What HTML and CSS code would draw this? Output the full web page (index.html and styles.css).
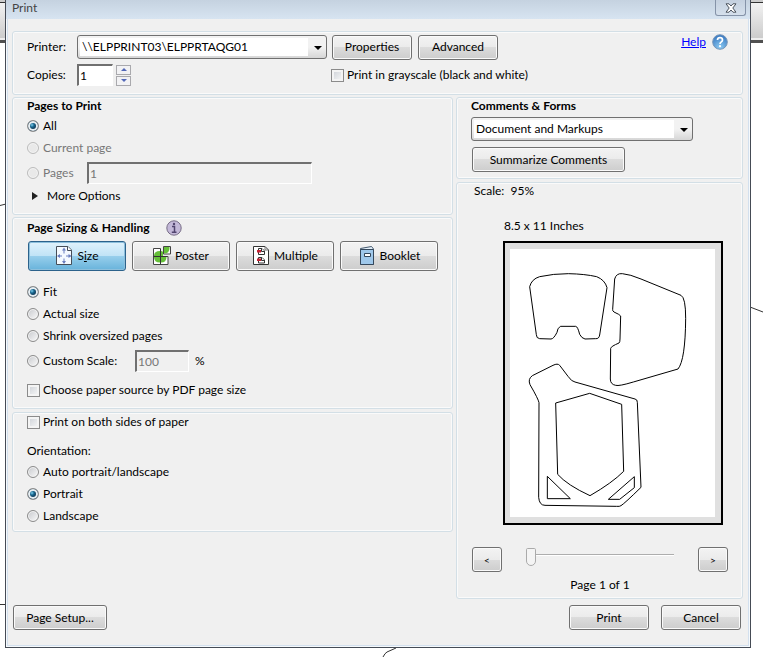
FILE: index.html
```html
<!DOCTYPE html>
<html lang="en">
<head>
<meta charset="utf-8">
<title>Print</title>
<link rel="stylesheet" href="styles.css">
</head>
<body>
<div class="backdrop" aria-hidden="true">
  <div class="toolbar"></div>
  <svg class="line line-a" width="6" height="4"><path d="M0 2.500L6 1"/></svg>
  <svg class="line line-b" width="6" height="4"><path d="M0 1.500H6"/></svg>
  <svg class="line line-c" width="13" height="8"><path d="M0 1L13 6"/></svg>
  <svg class="line line-d" width="16" height="12"><path d="M1 11Q3 7 5 6L14 2"/></svg>
</div>
<main class="dialog">
  <header class="titlebar">
    <h1>Print</h1>
    <button class="close" aria-label="Close"><svg width="12" height="10" viewBox="0 0 12 10"><path d="M1 .8h3L6 3 8 .8h3L7.800 5 11 9.200H8L6 7 4 9.200H1L4.200 5Z" fill="#fff" stroke="#4b535e"/></svg></button>
  </header>
  <form class="content">
    <section class="group printer">
      <label for="printer">Printer:</label>
      <div class="line-row">
        <span class="combo wide"><select id="printer"><option>\\ELPPRINT03\ELPPRTAQG01</option></select></span>
        <button type="button" class="btn medium">Properties</button>
        <button type="button" class="btn medium advanced">Advanced</button>
      </div>
      <div class="help"><a href="#help">Help</a>
        <svg width="16" height="16" viewBox="0 0 16 16"><defs><radialGradient id="hb" cx=".5" cy=".85" r=".9"><stop stop-color="#8ccaf2"/><stop offset="1" stop-color="#2f70bc"/></radialGradient></defs><circle cx="8" cy="8" r="7.300" fill="url(#hb)" stroke="#7796b8"/><path d="M5.500 6Q5.600 3.700 8 3.700T10.500 6Q10.500 7.200 9.200 8 8 8.700 8 10" fill="none" stroke="#fff" stroke-width="1.700"/><circle cx="8" cy="12.200" r="1.100" fill="#fff"/></svg>
      </div>
      <label for="copies">Copies:</label>
      <div class="line-row">
        <input class="field copies" id="copies" type="number" value="1">
        <span class="spin"><button type="button" aria-label="More copies"><svg width="6" height="3"><path d="M0 3 3 0 6 3Z"/></svg></button><button type="button" aria-label="Fewer copies"><svg width="6" height="3"><path d="M0 0 3 3 6 0Z"/></svg></button></span>
        <label class="option gray"><input type="checkbox">Print in grayscale (black and white)</label>
      </div>
    </section>
    <div class="columns">
      <div class="left">
        <section class="group pages">
          <h2>Pages to Print</h2>
          <label class="option"><input type="radio" name="range" checked>All</label>
          <label class="option off"><input type="radio" name="range" disabled>Current page</label>
          <div class="option tall off"><input type="radio" name="range" id="rp" disabled><label class="pages-label" for="rp">Pages</label><input class="field page-range" aria-label="Page range" value="1" disabled></div>
          <button type="button" class="more"><svg width="6" height="8"><path d="M0 0 6 4 0 8Z"/></svg>More Options</button>
        </section>
        <section class="group sizing">
          <h2>Page Sizing &amp; Handling
            <svg width="16" height="16" viewBox="0 0 16 16"><circle cx="8" cy="8" r="7.200" fill="#c3b8d8" stroke="#776d86"/><path d="M6 6.500H8.500V12M5.800 12.200H10.500" fill="none" stroke="#51446e" stroke-width="1.500"/><circle cx="8" cy="4" r="1.200" fill="#51446e"/></svg></h2>
          <div class="modes">
            <button type="button" class="btn mode selected"><svg width="18" height="20" viewBox="0 0 18 20"><path d="M1.500.5H13L16.500 4V18.500H1.500Z" fill="#f5faff" stroke="#454d57"/><path d="M12.500.5V4.500H16.500" fill="#fff" stroke="#454d57"/><g fill="none" stroke="#6a7fc0"><path d="M9 3V7.500M9 12.500V17M3 10H7M11 10H15.500" /></g><path d="M9 1.500 11 4.500H7ZM9 18 7 15H11ZM2 10 5 8V12ZM16.500 10 13.500 8V12Z" fill="#6a7fc0"/></svg><span>S<u>i</u>ze</span></button>
            <button type="button" class="btn mode"><svg width="18" height="20" viewBox="0 0 18 20"><g fill="#fff" stroke="#444"><path d="M.5 2.500H7.500V10.500H.5ZM.5 10.500H7.500V18.500H.5ZM7.500 10.500H15V18.500H7.500ZM10.500.5H17.500V8H10.500Z"/></g><path d="M7 5V10H1Q1 5 7 5ZM1 11H7V16.500Q1 16.500 1 11ZM8 11H13.500Q13.500 16.500 8 16.500ZM11 1H16.500Q17 7.500 11 7.500ZM8 5Q9.500 5 10 6V10H8Z" fill="#65bf38"/><path d="M7.500 3V18.500M.5 10.500H14" stroke="#333"/></svg><span>Poster</span></button>
            <button type="button" class="btn mode"><svg width="18" height="20" viewBox="0 0 18 20"><path d="M1.500.5H13L16.500 4V18.500H1.500Z" fill="#fff" stroke="#333"/><path d="M13 .5V4H16.500" fill="none" stroke="#777"/><g fill="#fff" stroke="#333"><path d="M6.500 2.500H10L12.500 5V8.500H6.500ZM6.500 11.500H10L12.500 14V17H6.500Z"/><path d="M9.500 2.500V5.500H12.500M9.500 11.500V14.500H12.500"/></g><path d="M5 4H9V6.500H5ZM5 12.500H9V15H5Z" fill="#c52032"/></svg><span>Multiple</span></button>
            <button type="button" class="btn mode"><svg width="18" height="20" viewBox="0 0 18 20"><path d="M2.500 2.500 13.500.5 15.500 3V18.500H2.500Z" fill="#e5f1fb" stroke="#43566b"/><path d="M2.500 3.500H15.500V18.500H2.500Z" fill="#9fc8eb" stroke="#34475b"/><path d="M6.500 7.500H12.500V10.500H6.500Z" fill="#fff" stroke="#34475b"/></svg><span>Booklet</span></button>
          </div>
          <label class="option"><input type="radio" name="size" checked>Fit</label>
          <label class="option"><input type="radio" name="size">Actual size</label>
          <label class="option"><input type="radio" name="size">Shrink oversized pages</label>
          <div class="option tall"><input type="radio" name="size" id="rc"><label class="custom-label" for="rc">Custom Scale:</label><input class="field scale" aria-label="Custom scale percent" value="100" disabled><span>%</span></div>
          <label class="option source"><input type="checkbox">Choose paper source by PDF page size</label>
        </section>
        <section class="group orientation">
          <label class="option both"><input type="checkbox">Print on both sides of paper</label>
          <p>Orientation:</p>
          <label class="option"><input type="radio" name="orient">Auto portrait/landscape</label>
          <label class="option"><input type="radio" name="orient" checked>Portrait</label>
          <label class="option"><input type="radio" name="orient">Landscape</label>
        </section>
      </div>
      <div class="right">
        <section class="group comments">
          <h2>Comments &amp; Forms</h2>
          <span class="combo"><select aria-label="Comments and forms"><option>Document and Markups</option></select></span>
          <button type="button" class="btn summarize">Summarize Comments</button>
        </section>
        <section class="group preview">
          <p class="scale-text">Scale:&nbsp; 95%</p>
          <p class="paper-text">8.5 x 11 Inches</p>
          <div class="sheet">
            <svg viewBox="45 42 615 804" role="img" aria-label="Page preview"><g fill="none" stroke="#000" stroke-width="3">
              <path d="M104 155Q110 132 134 125Q175 116 220 116Q270 117 305 125Q330 135 336 158L314 300Q312 312 302 311L270 312Q260 310 254 298Q248 274 242 274H196Q187 280 186 292Q176 312 168 312L134 311Q124 310 124 299Z"/>
              <path d="M359 132Q364 114 382 116Q405 118 438 132L558 181Q572 188 572 250Q571 375 549 402L415 441Q372 454 362 451Q346 448 346 432L347 340Q348 334 372 324Q375 322 375 312L377 243Q375 239 357 231Q352 228 353 223Z"/>
              <path d="M132 503Q130 492 105 449Q98 432 112 422L174 391Q188 384 194 391L219 424Q230 440 240 441L420 492Q427 493 427 502L438 757Q390 804 378 812Q374 815 365 814L150 811Q133 811 131 787Z"/>
              <path d="M182 504 284 475 380 508 386 709Q351 744 285 782Q216 750 188 718Z"/>
              <path d="M157 724 226 791H157ZM418 725V758L374 793H340Z"/>
            </g></svg>
          </div>
          <div class="pager">
            <button type="button" class="btn step">&lt;</button>
            <input type="range" min="0" max="10" value="0" aria-label="Page">
            <button type="button" class="btn step">&gt;</button>
          </div>
          <p class="page-count">Page 1 of 1</p>
        </section>
      </div>
    </div>
    <footer>
      <button type="button" class="btn setup">Page Setup...</button>
      <button type="button" class="btn medium">Print</button>
      <button type="button" class="btn medium">Cancel</button>
    </footer>
  </form>
</main>
</body>
</html>
```
FILE: styles.css
```css
* { box-sizing: border-box; }
body {
  margin: 0;
  background: #fff;
  color: #000;
  font: 12px/16px Lato, "Open Sans", sans-serif;
  overflow: hidden;
}
button, input, select { font: inherit; color: inherit; margin: 0; }
h1, h2, p { margin: 0; font-size: inherit; }
svg { flex: none; }

.backdrop { position: absolute; inset: 0; z-index: -1; }
.toolbar {
  height: 43px;
  background: linear-gradient(#ccc 0 2px, #333 2px 3px, #f2f2f2 3px, #ccc 38px, #eee 38px 40px, #505050 40px);
}
.line { position: absolute; fill: none; stroke: #333; }
.line-a { left: 0; top: 203px; }
.line-b { left: 0; top: 603px; }
.line-c { right: 0; top: 306px; }
.line-d { left: 382px; top: 646px; }

.dialog {
  margin: 0 12px 0 5px;
  border: 1px solid #454b55;
  border-top: 0;
  background: #f0f0f0;
  box-shadow: inset 0 0 0 1px #f5f9fc, inset 0 0 0 2px #d3e0ee;
}
.titlebar {
  display: flex;
  justify-content: space-between;
  height: 19px;
  padding: 0 4px 0 6px;
  background: linear-gradient(#c5d2e0, #d7e4f1);
  color: #444;
}
.titlebar h1 { font-weight: 400; }
.close {
  display: grid;
  place-items: center;
  width: 31px;
  height: 16px;
  padding: 0;
  border: 1px solid #8593a8;
  border-top: 0;
  border-radius: 0 0 3px 3px;
  background: linear-gradient(#c4d0df, #d5e0ec);
}

.content { padding: 12px 7px 17px 6px; }
.group {
  border: 1px solid #d3dfe6;
  border-radius: 3px;
  box-shadow: inset 0 0 0 1px #fafafa;
  padding: 0 14px;
}
.printer {
  display: grid;
  grid-template-columns: 50px 1fr auto;
  grid-template-rows: 26px 24px;
  row-gap: 3px;
  align-items: center;
  padding: 2px 14px 7px;
  margin-bottom: 2px;
}
.line-row { display: flex; align-items: center; }
.help { display: flex; gap: 6px; align-self: start; }
.help a { color: #00f; }
.advanced { margin-left: 6px; }

.combo {
  position: relative;
  display: block;
  height: 24px;
  border: 1px solid #707070;
  border-radius: 3px;
  background: linear-gradient(#f2f2f2 50%, #d6d6d6);
  padding: 2px 18px 2px 2px;
}
.combo::after {
  content: "";
  position: absolute;
  right: 4px;
  top: 10px;
  border: 4px solid transparent;
  border-top-color: #000;
  border-bottom: 0;
}
.combo select {
  display: block;
  width: 100%;
  height: 18px;
  appearance: none;
  border: 0;
  padding: 0 2px;
  line-height: 18px;
  background: #fff;
}
.wide { width: 250px; margin-right: 5px; }

.btn {
  height: 25px;
  padding: 0 4px;
  border: 1px solid #707070;
  border-radius: 3px;
  background: linear-gradient(#f3f3f3, #ebebeb 50%, #dcdcdc 50%, #cdcdcd);
  box-shadow: inset 0 0 0 1px #fafafa;
}
.medium { width: 80px; }
.field {
  height: 22px;
  padding: 0 1px;
  border: 1px solid #fff;
  border-top: 2px solid #707070;
  border-left: 2px solid #707070;
  background: #fff;
}
.field:disabled { background: #f0f0f0; color: #777; }
.copies { width: 36px; appearance: textfield; }
.copies::-webkit-inner-spin-button { appearance: none; }
.spin { display: grid; gap: 1px; margin: 0 200px 0 3px; }
.spin button {
  display: grid;
  place-items: center;
  width: 15px;
  height: 10px;
  padding: 0;
  border: 1px solid #a9a9ad;
  background: #f2f2f4;
}
.spin path { fill: #5368b8; }

.option { display: flex; align-items: center; height: 22px; }
.off { color: #777; }
.tall { height: 28px; }
input[type="checkbox"], input[type="radio"] {
  appearance: none;
  flex: none;
  margin-right: 4px;
  border: 1px solid #8b8b8b;
}
input[type="checkbox"] {
  width: 13px;
  height: 13px;
  margin-right: 3px;
  background: linear-gradient(135deg, #cbcfd5, #fafafa);
  box-shadow: inset 0 0 0 2px #f4f4f4;
}
input[type="radio"] {
  width: 12px;
  height: 12px;
  border-radius: 50%;
  background: linear-gradient(135deg, #c7c9cd, #fafafa);
  box-shadow: inset 0 0 0 1px #f4f4f4;
}
input[type="radio"]:disabled { border-color: #bcbcbc; background: #e9e9e9; }
input[type="radio"]:checked {
  background: radial-gradient(circle at 4px 4px, #7fd0f0, #17668e 2px, #123e5c 4px);
  box-shadow: inset 0 0 0 2px #e8eef2;
}

.columns { display: grid; grid-template-columns: 441fr 287fr; gap: 3px; }
.pages { padding-bottom: 9px; margin-bottom: 2px; }
.pages h2 { margin-bottom: 1px; }
.pages-label { width: 44px; }
.page-range { width: 225px; }
.more {
  display: flex;
  align-items: center;
  gap: 9px;
  height: 18px;
  padding: 0 5px;
  border: 0;
  background: none;
}
.more path { fill: #222; }
.sizing { padding-bottom: 7px; margin-bottom: 3px; }
.sizing h2 { display: flex; align-items: center; gap: 16px; height: 20px; margin-bottom: 3px; }
.modes { display: grid; grid-template-columns: repeat(4, 98px); gap: 6px; margin: 0 0 10px 1px; }
.mode { display: flex; justify-content: center; align-items: center; gap: 4px; height: 30px; }
.selected {
  border-color: #2c628b;
  background: linear-gradient(#e0f2fc, #c0e3f6 50%, #98cfec 50%, #68b3db);
  box-shadow: inset 0 0 0 1px #8cbfdc;
}
.custom-label { width: 92px; }
.scale { width: 54px; margin-right: 6px; }
.source { margin-top: 4px; }
.orientation { padding-bottom: 4px; }
.both { height: 18px; margin-bottom: 10px; }
.orientation p { height: 20px; line-height: 20px; }

.comments { padding-bottom: 6px; margin-bottom: 3px; }
.comments h2 { margin-bottom: 3px; }
.comments .combo { width: 222px; margin-bottom: 6px; }
.summarize { width: 153px; margin-left: 1px; display: block; }
.preview { padding: 0 14px 5px 15px; }
.scale-text { padding-left: 2px; }
.paper-text { padding: 19px 0 7px 32px; }
.sheet {
  width: 220px;
  margin-left: 31px;
  padding: 6px 6px 6px 5px;
  border: 2px solid #000;
  background: #e0e0e0;
}
.sheet svg { display: block; width: 100%; background: #fff; }
.pager { display: flex; justify-content: space-between; align-items: flex-start; margin-top: 22px; }
.step { width: 30px; font-size: 10px; }
.pager input { width: 148px; height: 20px; appearance: none; background: none; margin-right: 1px; }
.pager input::-webkit-slider-runnable-track {
  height: 20px;
  background: linear-gradient(transparent 7px, #adadad 7px 8px, #fff 8px 9px, transparent 9px);
}
.pager input::-webkit-slider-thumb {
  appearance: none;
  width: 10px;
  height: 18px;
  margin-top: 1px;
  border: 1px solid #aaa;
  border-radius: 2px 2px 6px 6px;
  background: #f4f4f4;
}
.page-count { text-align: center; margin-top: 5px; }

footer { display: flex; gap: 12px; padding: 6px 2px 0 1px; }
.setup { width: 94px; margin-right: auto; }
```
